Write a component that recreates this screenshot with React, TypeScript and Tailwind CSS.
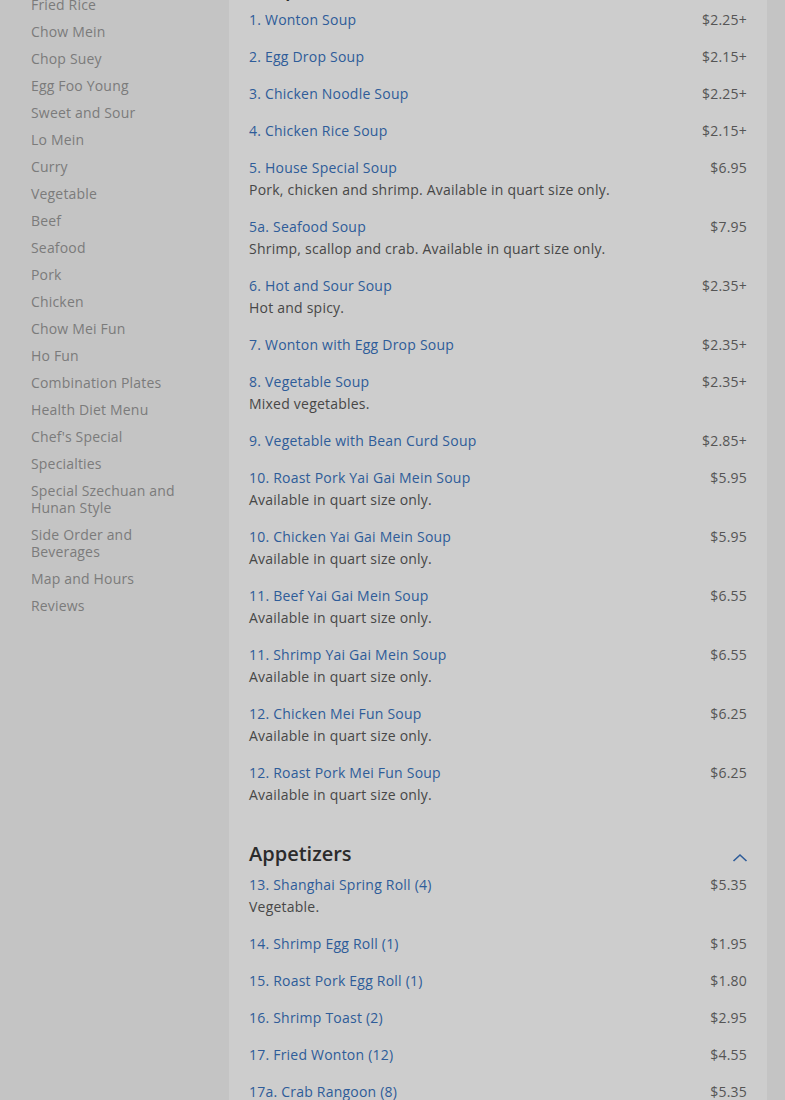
const NAV = [
  "Fried Rice",
  "Chow Mein",
  "Chop Suey",
  "Egg Foo Young",
  "Sweet and Sour",
  "Lo Mein",
  "Curry",
  "Vegetable",
  "Beef",
  "Seafood",
  "Pork",
  "Chicken",
  "Chow Mei Fun",
  "Ho Fun",
  "Combination Plates",
  "Health Diet Menu",
  "Chef's Special",
  "Specialties",
  "Special Szechuan and Hunan Style",
  "Side Order and Beverages",
  "Map and Hours",
  "Reviews",
];

type Item = { name: string; price: string; desc?: string };

const QUART = "Available in quart size only.";

const SOUPS: Item[] = [
  { name: "1. Wonton Soup", price: "$2.25+" },
  { name: "2. Egg Drop Soup", price: "$2.15+" },
  { name: "3. Chicken Noodle Soup", price: "$2.25+" },
  { name: "4. Chicken Rice Soup", price: "$2.15+" },
  { name: "5. House Special Soup", price: "$6.95", desc: "Pork, chicken and shrimp. Available in quart size only." },
  { name: "5a. Seafood Soup", price: "$7.95", desc: "Shrimp, scallop and crab. Available in quart size only." },
  { name: "6. Hot and Sour Soup", price: "$2.35+", desc: "Hot and spicy." },
  { name: "7. Wonton with Egg Drop Soup", price: "$2.35+" },
  { name: "8. Vegetable Soup", price: "$2.35+", desc: "Mixed vegetables." },
  { name: "9. Vegetable with Bean Curd Soup", price: "$2.85+" },
  { name: "10. Roast Pork Yai Gai Mein Soup", price: "$5.95", desc: QUART },
  { name: "10. Chicken Yai Gai Mein Soup", price: "$5.95", desc: QUART },
  { name: "11. Beef Yai Gai Mein Soup", price: "$6.55", desc: QUART },
  { name: "11. Shrimp Yai Gai Mein Soup", price: "$6.55", desc: QUART },
  { name: "12. Chicken Mei Fun Soup", price: "$6.25", desc: QUART },
  { name: "12. Roast Pork Mei Fun Soup", price: "$6.25", desc: QUART },
];

const APPETIZERS: Item[] = [
  { name: "13. Shanghai Spring Roll (4)", price: "$5.35", desc: "Vegetable." },
  { name: "14. Shrimp Egg Roll (1)", price: "$1.95" },
  { name: "15. Roast Pork Egg Roll (1)", price: "$1.80" },
  { name: "16. Shrimp Toast (2)", price: "$2.95" },
  { name: "17. Fried Wonton (12)", price: "$4.55" },
  { name: "17a. Crab Rangoon (8)", price: "$5.35" },
];

function Chevron() {
  return (
    <svg width="16" height="10" viewBox="0 0 16 10" className="mt-[7px] mr-[-1px]">
      <polyline points="1.5,8 8,2 14.5,8" fill="none" stroke="#2e5c99" strokeWidth="1.6" />
    </svg>
  );
}

function Section({ title, items, first }: { title: string; items: Item[]; first?: boolean }) {
  return (
    <section className={first ? "" : "pt-5"}>
      <div className="flex items-center justify-between h-[26px] mb-[7px]">
        <h2 className="text-[20px] leading-[26px] font-semibold text-[#2b2b2b]">{title}</h2>
        {!first && <Chevron />}
      </div>
      <ul className="tracking-[0.22px]">
        {items.map((it) => (
          <li key={it.name} className="mb-[15px]">
            <div className="flex justify-between leading-[22px]">
              <span className="text-[#2e5c99]">{it.name}</span>
              <span className="text-[#555]">{it.price}</span>
            </div>
            {it.desc && <p className="leading-[22px] text-[#474747]">{it.desc}</p>}
          </li>
        ))}
      </ul>
    </section>
  );
}

export default function App() {
  return (
    <div className="h-[1100px] overflow-hidden bg-[#c4c4c4] text-[14px]" style={{ fontFamily: '"Open Sans", "Liberation Sans", sans-serif' }}>
      <div className="flex -mt-[24px]">
        <nav className="w-[229px] shrink-0 pl-[31px] pr-[30px] pt-[20px]">
          <ul className="flex flex-col gap-[10px] tracking-[0.18px]">
            {NAV.map((n) => (
              <li key={n} className="leading-[17px] text-[#7b7b7b]">{n}</li>
            ))}
          </ul>
        </nav>
        <main className="w-[538px] shrink-0 bg-[#cdcdcd] px-5 min-h-[1200px]">
          <Section title="Soups" items={SOUPS} first />
          <Section title="Appetizers" items={APPETIZERS} />
        </main>
      </div>
    </div>
  );
}
